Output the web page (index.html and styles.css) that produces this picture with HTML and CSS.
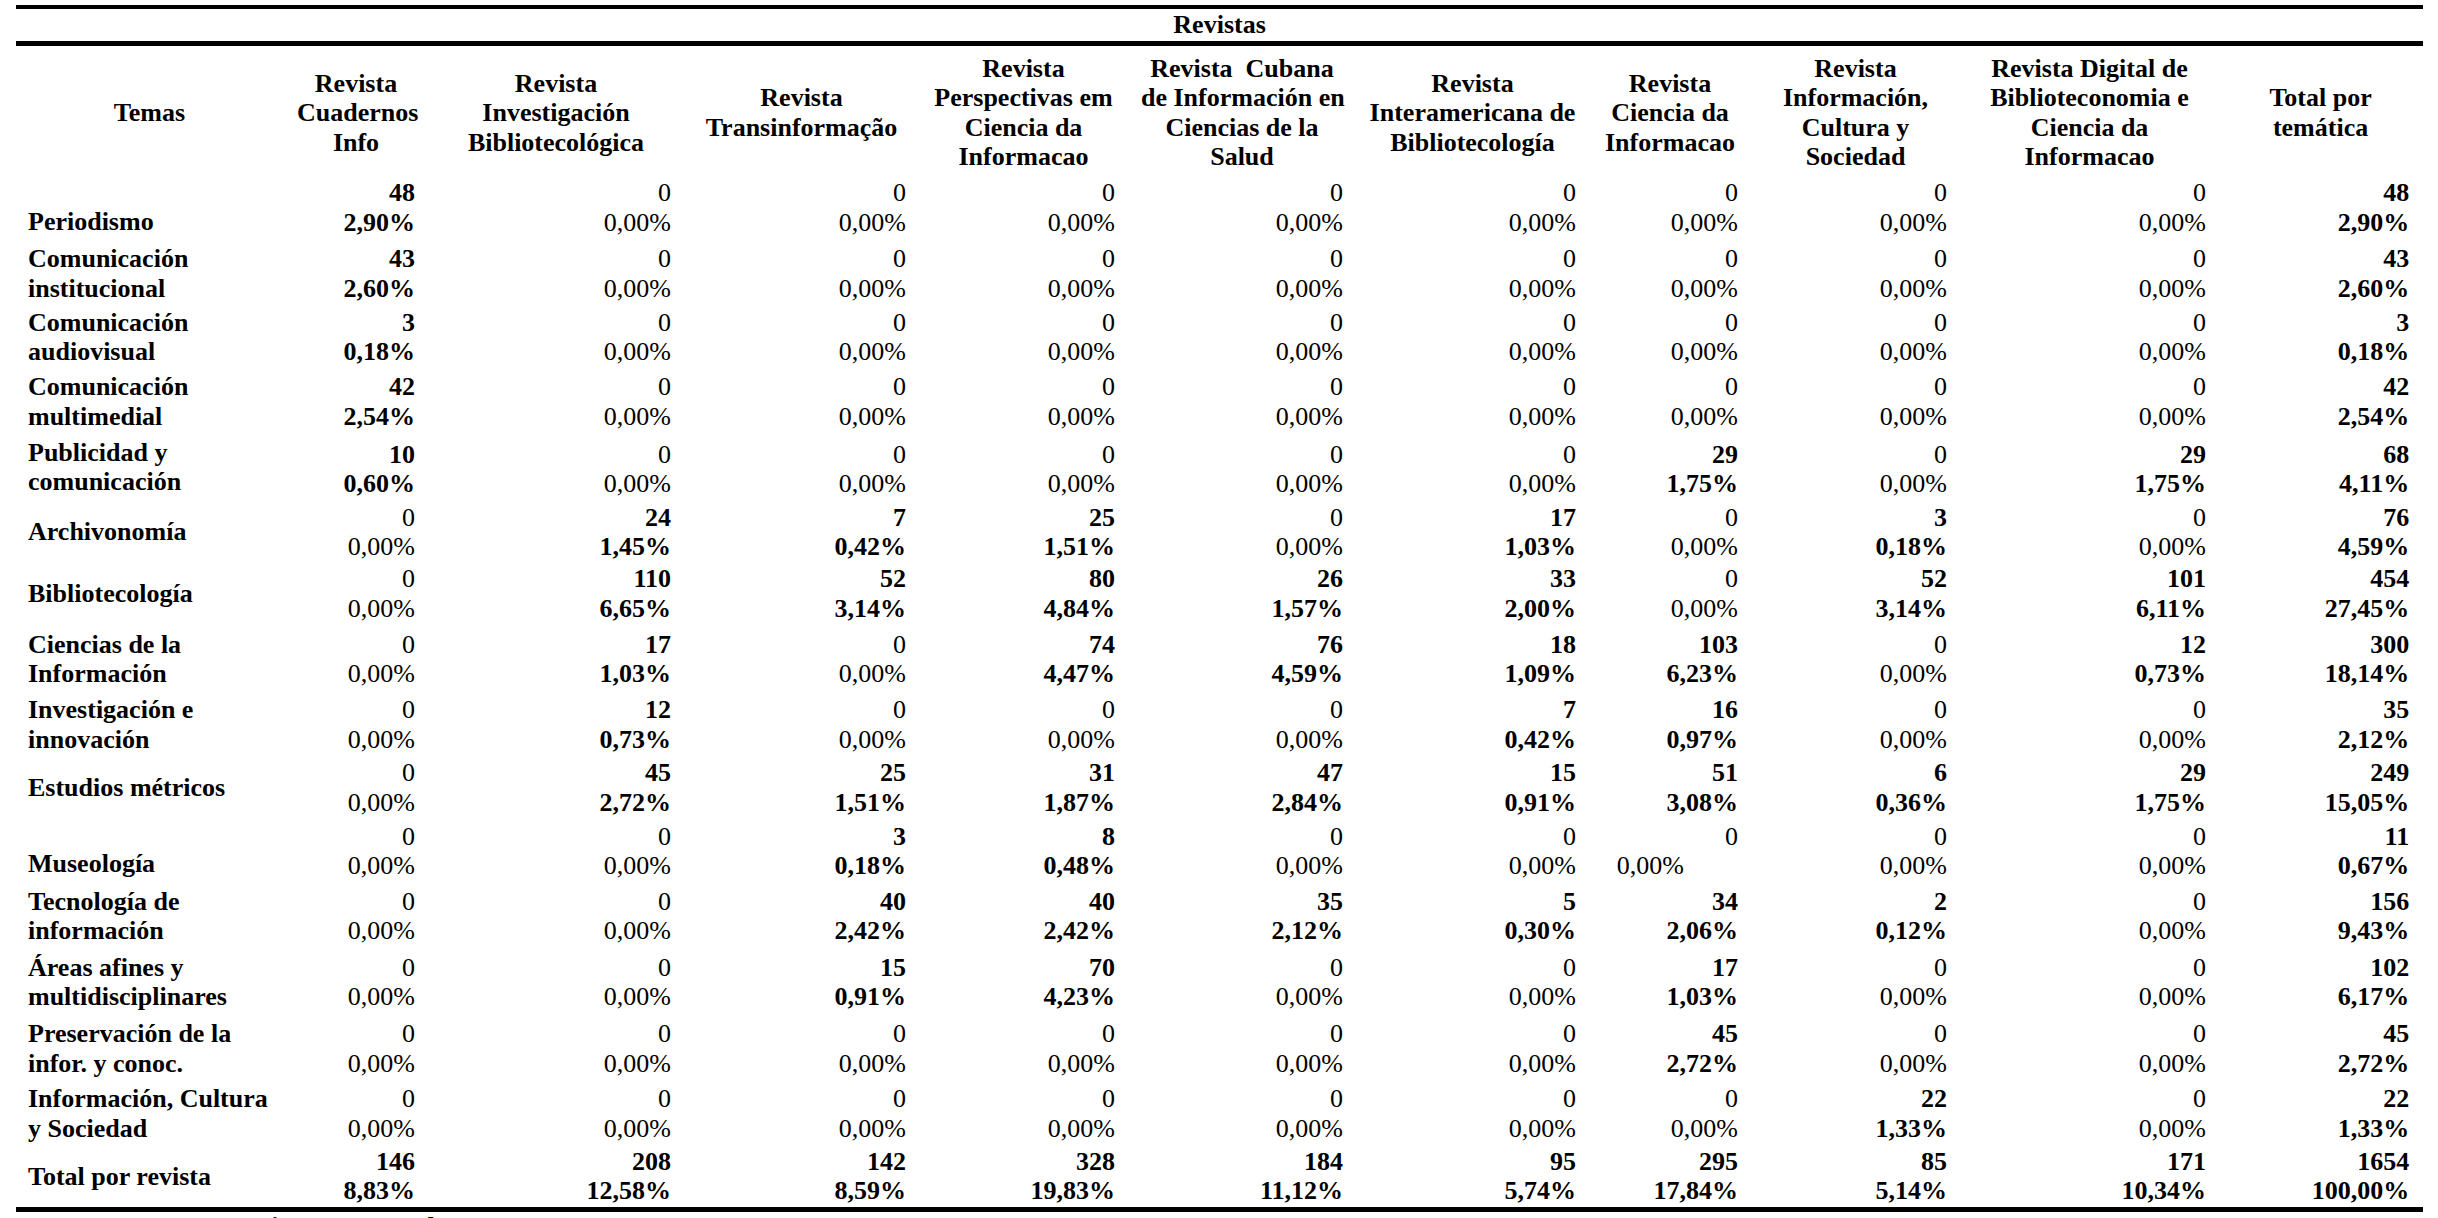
FILE: index.html
```html
<!DOCTYPE html>
<html lang="es">
<head>
<meta charset="utf-8">
<title>Revistas</title>
<link rel="stylesheet" href="styles.css">
</head>
<body>
<table class="tbl">
  <colgroup>
    <col class="w0"><col class="w1"><col class="w2"><col class="w3"><col class="w4"><col class="w5"><col class="w6"><col class="w7"><col class="w8"><col class="w9"><col class="w10">
  </colgroup>
  <thead>
    <tr class="hrow1"><th colspan="11">Revistas</th></tr>
    <tr class="hrow2">
      <th>Temas</th>
      <th>Revista<br>Cuadernos<br>Info</th>
      <th>Revista<br>Investigación<br>Bibliotecológica</th>
      <th>Revista<br>Transinformação</th>
      <th>Revista<br>Perspectivas em<br>Ciencia da<br>Informacao</th>
      <th>Revista&nbsp; Cubana<br>de Información en<br>Ciencias de la<br>Salud</th>
      <th>Revista<br>Interamericana de<br>Bibliotecología</th>
      <th>Revista<br>Ciencia da<br>Informacao</th>
      <th>Revista<br>Información,<br>Cultura y<br>Sociedad</th>
      <th>Revista Digital de<br>Biblioteconomia e<br>Ciencia da<br>Informacao</th>
      <th>Total por<br>temática</th>
    </tr>
  </thead>
  <tbody>
    <tr class="r1">
      <td class="lbl lb">Periodismo</td>
      <td class="b">48<br>2,90%</td><td>0<br>0,00%</td><td>0<br>0,00%</td><td>0<br>0,00%</td><td>0<br>0,00%</td><td>0<br>0,00%</td><td>0<br>0,00%</td><td>0<br>0,00%</td><td>0<br>0,00%</td><td class="b">48<br>2,90%</td>
    </tr>
    <tr class="r2">
      <td class="lbl">Comunicación<br>institucional</td>
      <td class="b">43<br>2,60%</td><td>0<br>0,00%</td><td>0<br>0,00%</td><td>0<br>0,00%</td><td>0<br>0,00%</td><td>0<br>0,00%</td><td>0<br>0,00%</td><td>0<br>0,00%</td><td>0<br>0,00%</td><td class="b">43<br>2,60%</td>
    </tr>
    <tr class="r3">
      <td class="lbl">Comunicación<br>audiovisual</td>
      <td class="b">3<br>0,18%</td><td>0<br>0,00%</td><td>0<br>0,00%</td><td>0<br>0,00%</td><td>0<br>0,00%</td><td>0<br>0,00%</td><td>0<br>0,00%</td><td>0<br>0,00%</td><td>0<br>0,00%</td><td class="b">3<br>0,18%</td>
    </tr>
    <tr class="r4">
      <td class="lbl">Comunicación<br>multimedial</td>
      <td class="b">42<br>2,54%</td><td>0<br>0,00%</td><td>0<br>0,00%</td><td>0<br>0,00%</td><td>0<br>0,00%</td><td>0<br>0,00%</td><td>0<br>0,00%</td><td>0<br>0,00%</td><td>0<br>0,00%</td><td class="b">42<br>2,54%</td>
    </tr>
    <tr class="r5">
      <td class="lbl lt">Publicidad y<br>comunicación</td>
      <td class="b">10<br>0,60%</td><td>0<br>0,00%</td><td>0<br>0,00%</td><td>0<br>0,00%</td><td>0<br>0,00%</td><td>0<br>0,00%</td><td class="b">29<br>1,75%</td><td>0<br>0,00%</td><td class="b">29<br>1,75%</td><td class="b">68<br>4,11%</td>
    </tr>
    <tr class="r6">
      <td class="lbl">Archivonomía</td>
      <td>0<br>0,00%</td><td class="b">24<br>1,45%</td><td class="b">7<br>0,42%</td><td class="b">25<br>1,51%</td><td>0<br>0,00%</td><td class="b">17<br>1,03%</td><td>0<br>0,00%</td><td class="b">3<br>0,18%</td><td>0<br>0,00%</td><td class="b">76<br>4,59%</td>
    </tr>
    <tr class="r7">
      <td class="lbl">Bibliotecología</td>
      <td>0<br>0,00%</td><td class="b">110<br>6,65%</td><td class="b">52<br>3,14%</td><td class="b">80<br>4,84%</td><td class="b">26<br>1,57%</td><td class="b">33<br>2,00%</td><td>0<br>0,00%</td><td class="b">52<br>3,14%</td><td class="b">101<br>6,11%</td><td class="b">454<br>27,45%</td>
    </tr>
    <tr class="r8">
      <td class="lbl">Ciencias de la<br>Información</td>
      <td>0<br>0,00%</td><td class="b">17<br>1,03%</td><td>0<br>0,00%</td><td class="b">74<br>4,47%</td><td class="b">76<br>4,59%</td><td class="b">18<br>1,09%</td><td class="b">103<br>6,23%</td><td>0<br>0,00%</td><td class="b">12<br>0,73%</td><td class="b">300<br>18,14%</td>
    </tr>
    <tr class="r9">
      <td class="lbl">Investigación e<br>innovación</td>
      <td>0<br>0,00%</td><td class="b">12<br>0,73%</td><td>0<br>0,00%</td><td>0<br>0,00%</td><td>0<br>0,00%</td><td class="b">7<br>0,42%</td><td class="b">16<br>0,97%</td><td>0<br>0,00%</td><td>0<br>0,00%</td><td class="b">35<br>2,12%</td>
    </tr>
    <tr class="r10">
      <td class="lbl">Estudios métricos</td>
      <td>0<br>0,00%</td><td class="b">45<br>2,72%</td><td class="b">25<br>1,51%</td><td class="b">31<br>1,87%</td><td class="b">47<br>2,84%</td><td class="b">15<br>0,91%</td><td class="b">51<br>3,08%</td><td class="b">6<br>0,36%</td><td class="b">29<br>1,75%</td><td class="b">249<br>15,05%</td>
    </tr>
    <tr class="r11">
      <td class="lbl lb">Museología</td>
      <td>0<br>0,00%</td><td>0<br>0,00%</td><td class="b">3<br>0,18%</td><td class="b">8<br>0,48%</td><td>0<br>0,00%</td><td>0<br>0,00%</td><td>0<br><span class="shift">0,00%</span></td><td>0<br>0,00%</td><td>0<br>0,00%</td><td class="b">11<br>0,67%</td>
    </tr>
    <tr class="r12">
      <td class="lbl">Tecnología de<br>información</td>
      <td>0<br>0,00%</td><td>0<br>0,00%</td><td class="b">40<br>2,42%</td><td class="b">40<br>2,42%</td><td class="b">35<br>2,12%</td><td class="b">5<br>0,30%</td><td class="b">34<br>2,06%</td><td class="b">2<br>0,12%</td><td>0<br>0,00%</td><td class="b">156<br>9,43%</td>
    </tr>
    <tr class="r13">
      <td class="lbl">Áreas afines y<br>multidisciplinares</td>
      <td>0<br>0,00%</td><td>0<br>0,00%</td><td class="b">15<br>0,91%</td><td class="b">70<br>4,23%</td><td>0<br>0,00%</td><td>0<br>0,00%</td><td class="b">17<br>1,03%</td><td>0<br>0,00%</td><td>0<br>0,00%</td><td class="b">102<br>6,17%</td>
    </tr>
    <tr class="r14">
      <td class="lbl">Preservación de la<br>infor. y conoc.</td>
      <td>0<br>0,00%</td><td>0<br>0,00%</td><td>0<br>0,00%</td><td>0<br>0,00%</td><td>0<br>0,00%</td><td>0<br>0,00%</td><td class="b">45<br>2,72%</td><td>0<br>0,00%</td><td>0<br>0,00%</td><td class="b">45<br>2,72%</td>
    </tr>
    <tr class="r15">
      <td class="lbl">Información, Cultura<br>y Sociedad</td>
      <td>0<br>0,00%</td><td>0<br>0,00%</td><td>0<br>0,00%</td><td>0<br>0,00%</td><td>0<br>0,00%</td><td>0<br>0,00%</td><td>0<br>0,00%</td><td class="b">22<br>1,33%</td><td>0<br>0,00%</td><td class="b">22<br>1,33%</td>
    </tr>
    <tr class="r16 last">
      <td class="lbl">Total por revista</td>
      <td class="b">146<br>8,83%</td><td class="b">208<br>12,58%</td><td class="b">142<br>8,59%</td><td class="b">328<br>19,83%</td><td class="b">184<br>11,12%</td><td class="b">95<br>5,74%</td><td class="b">295<br>17,84%</td><td class="b">85<br>5,14%</td><td class="b">171<br>10,34%</td><td class="b">1654<br>100,00%</td>
    </tr>
  </tbody>
</table>
<p class="source">Fuente: Resumen Sistemas Cuadro UNIH</p>
</body>
</html>
```

FILE: styles.css
```css
html, body {
  background: #ffffff;
}
body {
  margin: 5px 15px 0 16px;
  font-family: "Liberation Serif", "Times New Roman", serif;
  font-size: 26px;
  line-height: 29.5px;
  color: #000000;
}
.tbl {
  width: 2407px;
  table-layout: fixed;
  border-collapse: separate;
  border-spacing: 0;
}
.w0 { width: 269px; }
.w1 { width: 144px; }
.w2 { width: 256px; }
.w3 { width: 235px; }
.w4 { width: 209px; }
.w5 { width: 228px; }
.w6 { width: 233px; }
.w7 { width: 162px; }
.w8 { width: 209px; }
.w9 { width: 259px; }
.w10 { width: 203px; }

th, td {
  padding: 0 14px 0 12px;
  white-space: nowrap;
}
th {
  font-weight: bold;
  text-align: center;
}
.hrow1 { height: 41px; }
.hrow1 th {
  border-top: 4px solid #000;
  border-bottom: 5px solid #000;
  padding: 0;
  vertical-align: middle;
}
.hrow2 { height: 127.5px; }
.hrow2 th {
  padding-top: 6px;
  vertical-align: middle;
}
td {
  text-align: right;
  vertical-align: middle;
  font-weight: normal;
}
td.b { font-weight: bold; }
td.lbl {
  text-align: left;
  font-weight: bold;
}
td.lb {
  vertical-align: bottom;
  padding-bottom: 5px;
}
td.lt {
  vertical-align: top;
  padding-top: 2px;
}
.shift { margin-right: 54px; }

.r1 { height: 68px; }
.r2 { height: 64.5px; }
.r3 { height: 62px; }
.r4 { height: 67.5px; }
.r5 { height: 67px; }
.r6 { height: 58px; }
.r7 { height: 64px; }
.r8 { height: 67.5px; }
.r9 { height: 63.5px; }
.r10 { height: 62.5px; }
.r11 { height: 64.5px; }
.r12 { height: 65px; }
.r13 { height: 67.5px; }
.r14 { height: 65.5px; }
.r15 { height: 64px; }
.r16 { height: 66.5px; }
.last td { border-bottom: 5px solid #000; }

.source {
  margin: 0;
  padding-left: 12px;
  font-weight: bold;
  word-spacing: 14px;
}
```
